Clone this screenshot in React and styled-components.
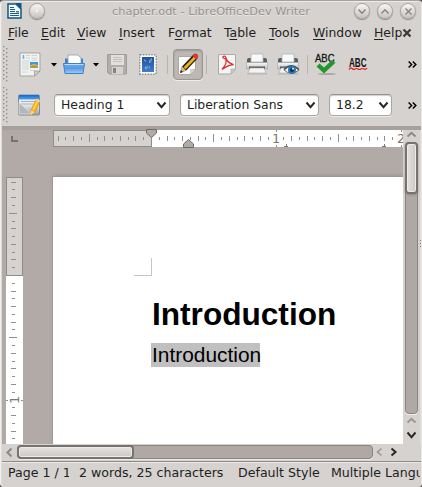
import React from "react";
import styled, { createGlobalStyle, css } from "styled-components";

const Global = createGlobalStyle`
  *, *::before, *::after { box-sizing: border-box; }
  html, body { margin: 0; padding: 0; overflow: hidden; background: #55524f; }
  svg { display: block; flex: none; overflow: visible; }
`;

const Window = styled.div`
  width: 422px;
  height: 487px;
  display: flex;
  flex-direction: column;
  overflow: hidden;
  background: #d6d2cf;
  border-top: 1px solid #a5a19e;
  border-left: 1px solid #f1efed;
  border-right: 1px solid #e9e7e5;
  border-radius: 4px;
  box-shadow: inset 0 1px 0 #eeecea, inset 1px 0 0 #dddad8;
  font-family: "DejaVu Sans", sans-serif;
  font-size: 12.4px;
  color: #221f1e;
  white-space: nowrap;
`;

const TitleBar = styled.header`
  height: 21px;
  flex: none;
  display: flex;
  align-items: center;
  padding: 0 5px 1px 6px;
`;
const TitleText = styled.div`
  flex: 1;
  padding: 0 0 0 67px;
  font-size: 11.35px;
  color: #969290;
  text-shadow: 0 1px 0 #e9e7e5;
`;
const TitleButtons = styled.div`
  display: flex;
  gap: 7px;
`;
const RoundButton = styled.div`
  width: 16px;
  height: 16px;
  flex: none;
  margin-left: ${(p) => p.$gap || 0}px;
  display: grid;
  place-items: center;
  border-radius: 50%;
  border: 1px solid #aaa6a3;
  background: linear-gradient(#f7f6f5, #c8c4c1);
  box-shadow: 0 1px 1px #8f8b88;
`;
const Dot = styled.i`
  width: 2px;
  height: 2px;
  border-radius: 50%;
  background: #fff;
`;

const MenuBar = styled.nav`
  height: 21px;
  flex: none;
  display: flex;
  align-items: center;
  padding-left: 7px;
`;
const MenuItem = styled.div`
  width: ${(p) => p.$w}px;
  flex: none;
  line-height: 15px;
  u { text-decoration-thickness: 1px; text-underline-offset: 2px; }
`;

const Toolbar = styled.div`
  height: ${(p) => p.$h}px;
  flex: none;
  display: flex;
  align-items: center;
  padding: 0 0 ${(p) => p.$lift || 0}px 1px;
`;
const Slot = styled.div`
  width: ${(p) => p.$w}px;
  height: 100%;
  flex: none;
  display: flex;
  align-items: center;
`;
const Separator = styled.div`
  width: 1px;
  height: 19px;
  margin-right: ${(p) => p.$after}px;
  flex: none;
  background: #b7b3b0;
`;
const Pressed = styled.div`
  width: 30px;
  height: 31px;
  margin-right: 3px;
  flex: none;
  display: grid;
  place-items: center;
  background: #bdb8b4;
  border: 1px solid #9a9692;
  border-radius: 4px;
  box-shadow: inset 0 1px 2px #9c9793, 0 1px 0 #efedeb;
`;
const Combo = styled.div`
  width: ${(p) => p.$w}px;
  height: 22px;
  margin-right: 10px;
  padding: 0 3px 1px 6px;
  flex: none;
  display: flex;
  align-items: center;
  justify-content: space-between;
  background: #fff;
  border: 1px solid #aaa6a3;
  border-top-color: #96928f;
  border-radius: 4px;
  box-shadow: inset 0 1px 1px #d0cdca, 0 1px 0 #eeecea;
`;

const Workspace = styled.main`
  height: 318px;
  flex: none;
  display: flex;
  margin-left: 1px;
  background: #b2aaa7;
  border-top: 4px solid #a7a19d;
`;
const RulerGutter = styled.div`
  width: 51px;
  flex: none;
  display: flex;
  flex-direction: column;
  padding-left: 4px;
`;
const TabCorner = styled.div`
  height: 47px;
  flex: none;
  padding: 6px 0 0 5px;
`;
const VRuler = styled.div`
  width: 17px;
  flex: 1;
  background: linear-gradient(#d6d2cf 99px, #fff 99px);
`;
const DocumentColumn = styled.div`
  width: 350px;
  flex: none;
  display: flex;
  flex-direction: column;
`;
const HRuler = styled.div`
  height: 17px;
  flex: none;
  margin-bottom: 29px;
  background: linear-gradient(90deg, #d6d2cf 99px, #fff 99px);
`;
const Page = styled.article`
  flex: 1;
  padding: 81px 0 0 98px;
  background: #fff;
  border-top: 1px solid #9d9793;
  box-shadow: -1px 0 0 #a09995, 0 -1px 3px #9d9692;
  clip-path: inset(-5px 0 0 -5px);
  font-family: "Liberation Sans", sans-serif;
  color: #000;
`;
const MarginCorner = styled.div`
  width: 18px;
  height: 18px;
  margin-left: -17px;
  border-right: 1px solid #c4c4c4;
  border-bottom: 1px solid #c4c4c4;
`;
const Heading = styled.h1`
  margin: 20px 0 10px 1px;
  font-size: 31.6px;
  line-height: 37px;
  font-weight: 700;
`;
const Selection = styled.span`
  display: block;
  width: 109px;
  height: 24px;
  padding-left: 1px;
  line-height: 24px;
  font-size: 20.9px;
  background: #c0c0c0;
`;

const scrollTrack = css`
  flex: none;
  background: #b0a8a5;
  border: 1px solid #898481;
  border-radius: 4px;
  box-shadow: 0 1px 0 #eeecea;
`;
const VScroll = styled.div`
  width: 17px;
  flex: none;
  display: flex;
  flex-direction: column;
  align-items: center;
  padding-top: 2px;
  background: #d6d2cf;
`;
const VTrack = styled.div`
  ${scrollTrack}
  width: 13px;
  height: 272px;
  margin: 5px 0 4px;
`;
const VThumb = styled.div`
  height: 52px;
  margin: -1px 0 0 -1px;
  width: 13px;
  border: 2px solid #77726f;
  border-radius: 4px;
  background: linear-gradient(90deg, #e5e3e1, #cbc7c4);
  box-shadow: inset 0 0 0 1px #eeeceb, 0 1px 2px #8d8784;
`;
const ArrowGap = styled.div`
  height: 9px;
  flex: none;
`;
const SideGrip = styled.div`
  flex: 1;
  display: grid;
  place-items: center;
  padding-bottom: 88px;
  background: #dedbd9;
`;
const HScroll = styled.div`
  height: 17px;
  flex: none;
  display: flex;
  align-items: center;
  padding: 0 0 1px 6px;
`;
const HTrack = styled.div`
  ${scrollTrack}
  width: 356px;
  height: 14px;
  margin: 0 4px 0 5px;
`;
const HThumb = styled.div`
  width: 117px;
  height: 14px;
  margin: -1px 0 0 -1px;
  border: 2px solid #77726f;
  border-radius: 4px;
  background: linear-gradient(#e5e3e1, #cbc7c4);
  box-shadow: inset 0 0 0 1px #eeeceb;
`;
const StatusBar = styled.footer`
  flex: 1;
  display: flex;
  margin-left: 1px;
  padding: 3px 0 0 6px;
  border-top: 1px solid #8e8a87;
  box-shadow: inset 0 1px 0 #eceae8;
  font-size: 12.6px;
  line-height: 15px;
`;
const StatusField = styled.div`
  width: ${(p) => p.$w}px;
  margin-right: ${(p) => p.$gap || 0}px;
  flex: none;
  overflow: hidden;
`;

const Chevron = ({ dir, color = "#2b2826", w = 9, h = 5, sw = 2 }) => {
  const pts = {
    down: `0.5,0.5 ${w / 2},${h - 0.8} ${w - 0.5},0.5`,
    up: `0.5,${h - 0.5} ${w / 2},0.8 ${w - 0.5},${h - 0.5}`,
    left: `${w - 0.5},0.5 0.5,${h / 2} ${w - 0.5},${h - 0.5}`,
    right: `0.5,0.5 ${w - 0.5},${h / 2} 0.5,${h - 0.5}`,
  }[dir];
  return (
    <svg width={w} height={h}>
      <polyline points={pts} fill="none" stroke={color} strokeWidth={sw} />
    </svg>
  );
};
const Caret = () => (
  <svg width="6" height="3"><path d="M0 0H6L3 3.4Z" fill="#000" /></svg>
);
const More = () => (
  <svg width="9" height="7">
    <path d="M.6 .5L3.6 3.5L.6 6.5M4.8 .5L7.8 3.5L4.8 6.5" fill="none" stroke="#000" strokeWidth="1.5" />
  </svg>
);
const Grip = ({ rows }) => (
  <svg width="6" height={rows * 4}>
    {Array.from({ length: rows }, (_, i) => (
      <g key={i} fill="#938e8a">
        <rect x="1" y={i * 4} width="1.4" height="1.4" />
        <rect x="4" y={i * 4 + 2} width="1.4" height="1.4" />
      </g>
    ))}
  </svg>
);

const WriterLogo = () => (
  <svg width="15" height="16">
    <path d="M1 1H9L14 6V15H1Z" fill="#f5fafc" stroke="#0d5688" strokeWidth="1.5" />
    <path d="M8.6 0H14.5V6Z" fill="#0d5688" />
    <path d="M3 4.5H7M3 6.5H8M3 8.5H8M3 10.5H12M3 12.5H12" stroke="#146093" />
    <path d="M9 8H12V9.5H9Z" fill="#3481ac" />
  </svg>
);
const NewDocument = () => (
  <svg width="22" height="25">
    <path d="M1 1H21V19L15.5 24H1Z" fill="#f1f2f2" stroke="#a6a6a6" />
    <path d="M4.5 3V7" stroke="#5fb1e8" strokeWidth="1.5" />
    <path d="M7 3.5H11M7 6H11M12.5 3.5H18M12.5 6H18M3 9H11M3 11H10M3 13H10M3 15H10M3 17H10M12.5 8H18M3 20H9M11 18.5H16" stroke="#cdd0d1" strokeWidth=".9" />
    <rect x="11" y="10" width="8" height="3" fill="#359cdf" />
    <rect x="11" y="13" width="8" height="3" fill="#b89a3a" />
    <path d="M11 13.8L15 12.4L19 13.8" stroke="#d8c27a" fill="none" />
    <path d="M15.5 24V19H21Z" fill="#d0d0d0" stroke="#909090" strokeWidth=".7" />
  </svg>
);
const OpenFolder = () => (
  <svg width="22" height="21">
    <path d="M2 10V4.5H4.5L5.5 7H17L18 4.5H20V10Z" fill="#3d80c4" />
    <path d="M5 1H15L18 4V12H5Z" fill="#fff" stroke="#8d9aa7" strokeWidth=".8" />
    <path d="M.5 9.5H21.5L20 19.5H2Z" fill="url(#folderFront)" stroke="#3f80cc" />
    <path d="M1.5 10.5H20.5" stroke="#b9dcfa" />
    <defs>
      <linearGradient id="folderFront" x2="0" y2="1">
        <stop stopColor="#6aa8ec" /><stop offset=".5" stopColor="#5a9ce2" /><stop offset="1" stopColor="#a4cdf7" />
      </linearGradient>
    </defs>
  </svg>
);
const Save = () => (
  <svg width="20" height="21">
    <path d="M.5 .5H19.5V20H2L.5 18.5Z" fill="#b0aeac" stroke="#a09d9b" />
    <rect x="4" y="1" width="13" height="10" fill="#e2e0df" />
    <path d="M6 3.5H15M6 5.5H15M6 7.5H15" stroke="#c4c2c0" />
    <rect x="5" y="13" width="11" height="7" fill="#d5d3d1" />
    <rect x="6" y="14" width="3" height="5" fill="#858381" />
  </svg>
);
const Stamp = () => (
  <svg width="18" height="21">
    <rect x="1" y="1" width="16" height="19" fill="#f6f6f6" stroke="#8f8f8f" strokeWidth="2" strokeDasharray="1.4 1.4" />
    <rect x="1.5" y="1.5" width="15" height="18" fill="#fafafa" />
    <rect x="3" y="3" width="12" height="15" fill="url(#stampFill)" />
    <path d="M5 7L7.5 6L7 8ZM10 6L13 4.5L12.5 8L10.5 9ZM5.5 13L8.5 11.5L10 14L7 16Z" fill="#5d93d4" />
    <path d="M5 6H6M10 8H11M6 14H7M10 13H11M12 5H13" stroke="#a6c9ee" />
    <defs>
      <linearGradient id="stampFill" x2="0" y2="1">
        <stop stopColor="#234f9a" /><stop offset="1" stopColor="#3f7cc9" />
      </linearGradient>
    </defs>
  </svg>
);
const Edit = () => (
  <svg width="22" height="25">
    <path d="M1.5 4.5H18.5V17L13.5 22.5H1.5Z" fill="#fcfcfc" stroke="#9d9a97" strokeWidth=".8" />
    <path d="M13.5 22.5V17.5H18.5Z" fill="#d7d7d7" stroke="#aaa" strokeWidth=".5" />
    <path d="M3 21L5 14.5L16 3L20.3 6.8L9.2 18.4Z" fill="#252525" />
    <path d="M6.6 15.3L16.8 4.7L18.8 6.6L8.6 17.2Z" fill="#f0b31c" />
    <path d="M15.2 3.7L17 1.8Q19 1 20.5 2.6Q22 4.5 21 6.1L19.5 7.6Z" fill="#d93831" />
    <path d="M5.2 14.5L9 18.4L3 21Z" fill="#e1b781" />
    <path d="M3 21L3.9 18L6 20Z" fill="#222" />
  </svg>
);
const Pdf = () => (
  <svg width="18" height="21">
    <path d="M.5 .5H17.5V15L13 20H.5Z" fill="#f4f4f4" stroke="#aaa" />
    <path d="M13 20V15H17.5Z" fill="#ccc" stroke="#aaa" strokeWidth=".6" />
    <path d="M5 2.5Q7.5 1.4 8 4Q9 8.5 15.5 10.6Q9.5 11.2 4 15.5Q9.7 9 7.6 5Q4 4 5 2.5Z" fill="none" stroke="#e02c2c" strokeWidth="1.2" />
  </svg>
);
const Printer = ({ eye }) => (
  <svg width="22" height="22">
    <path d="M1 10V7Q1 5 3 5H19Q21 5 21 7V10Z" fill="#5a5c5c" />
    <path d="M5 1H17V9H5Z" fill="#f9f9f9" stroke="#b3b3b3" strokeWidth=".8" />
    <path d="M.5 9.5H21.5V16H.5Z" fill="url(#printerBody)" stroke="#a2a2a2" strokeWidth=".6" />
    <path d="M3 13.5H19V16H3Z" fill="#555" />
    <path d="M4 15H18L20 20H2Z" fill="#f4f4f4" stroke="#aaa" strokeWidth=".6" />
    <path d="M1 21H21" stroke="#b5b1ae" />
    <defs>
      <linearGradient id="printerBody" x2="0" y2="1">
        <stop stopColor="#fafafa" /><stop offset="1" stopColor="#bdbdbd" />
      </linearGradient>
    </defs>
    {eye && (
      <g>
        <path d="M7 17Q14 10 22 17Q14 23.5 7 17Z" fill="#edf5f9" stroke="#66737d" />
        <path d="M7 16.5Q14 9 22 16.5" fill="none" stroke="#4b565e" strokeWidth="1.4" />
        <circle cx="15" cy="17" r="4" fill="#2877b9" />
        <circle cx="15" cy="17" r="2" fill="#122f43" />
        <circle cx="16" cy="15.7" r="1" fill="#d6f3ff" />
      </g>
    )}
  </svg>
);
const Abc = styled.text`
  font-family: "Liberation Sans", sans-serif;
  font-weight: ${(p) => p.$weight};
  font-size: ${(p) => p.$size}px;
  fill: #151515;
`;
const Spelling = () => (
  <svg width="22" height="22">
    <ellipse cx="12" cy="21" rx="9" ry="1" fill="#aaa6a3" />
    <Abc x="0" y="8.5" $weight={400} $size={10.2} textLength="19.5" lengthAdjust="spacingAndGlyphs" stroke="#151515" strokeWidth=".3">ABC</Abc>
    <path d="M1.5 13.5L4.5 10.5L9 14.5L17 7L20.5 9.8L9 20.5Z" fill="#23962e" />
  </svg>
);
const AutoSpelling = () => (
  <svg width="18" height="14">
    <Abc x="0" y="9.5" $weight={700} $size={12.2} textLength="17.5" lengthAdjust="spacingAndGlyphs">ABC</Abc>
    <path d="M0 12.5Q1.5 10 3 11.5T6 12T9 12T12 12T15 12T18 11" fill="none" stroke="#ed1515" strokeWidth="1.2" />
  </svg>
);
const Styles = () => (
  <svg width="23" height="23">
    <rect x=".5" y="1" width="21" height="20" rx="1" fill="url(#sheet)" stroke="#868b90" />
    <rect x="1" y="1" width="20" height="4.5" fill="url(#sheetBar)" />
    <path d="M3 7.5H18M3 10H15" stroke="#aab4be" />
    <path d="M1 8.5L14 20H1Z" fill="#b3b7bc" stroke="#e8ebee" strokeWidth=".7" />
    <path d="M12 21.5L13.2 15.5L17.5 6.5L21.6 8.2L17.3 18Z" fill="#f8b11b" stroke="#dd9114" strokeWidth=".6" />
    <path d="M15.2 15.5L19.3 7.5" stroke="#ffdf60" strokeWidth="1.3" />
    <path d="M17.5 6.5L18.5 4.8L22.3 6.4L21.6 8.2Z" fill="#f0cf9c" />
    <path d="M12 21.5L13.2 16.6L16.6 18.3Z" fill="#f2d6ad" />
    <defs>
      <linearGradient id="sheet" x2="0" y2="1">
        <stop stopColor="#f4f6f8" /><stop offset=".5" stopColor="#e4e7ea" /><stop offset="1" stopColor="#9a9ea3" />
      </linearGradient>
      <linearGradient id="sheetBar" x2="0" y2="1">
        <stop stopColor="#1668c9" /><stop offset="1" stopColor="#4fa3ee" />
      </linearGradient>
    </defs>
  </svg>
);

const RulerNumber = styled.text`
  font-family: "DejaVu Sans", sans-serif;
  font-size: 12.8px;
  fill: #777;
`;
const STEP = 7.78;
const ticks = (from, to) =>
  Array.from({ length: to - from + 1 }, (_, i) => from + i).filter((n) => n !== 0 && n % 16 !== 0);
const tickLength = (n) => (n % 8 === 0 ? 8 : n % 2 === 0 ? 5 : 3);

const HorizontalTicks = () => (
  <svg width="350" height="17">
    <rect x=".5" y=".5" width="98" height="16" fill="none" stroke="#8f8b88" />
    {ticks(-12, 31).map((n) => {
      const l = tickLength(n);
      return <rect key={n} x={Math.round(98 + n * STEP)} y={Math.round(8 - l / 2)} width="1" height={l} fill="#8f8f8f" />;
    })}
    {[223, 348].map((x) => (
      <path key={x} d={`M${x + 0.5} 0V2M${x + 0.5} 15V17`} stroke="#8f8f8f" />
    ))}
    <RulerNumber x="219" y="13">1</RulerNumber>
    <svg width="350" height="17" overflow="hidden" viewBox="0 0 350 17">
      <RulerNumber x="344" y="13">2</RulerNumber>
    </svg>
    <path d="M231 16.5H235M233.5 14V17M329 16.5H333M331.5 14V17" stroke="#777" />
    <path d="M93.5 -.5H103.5V3L98.5 7.5L93.5 3Z" fill="#b2aaa7" stroke="#6e6a67" />
    <path d="M130.5 17.5H140.5V14L135.5 9.5L130.5 14Z" fill="#b2aaa7" stroke="#6e6a67" />
  </svg>
);
const VerticalTicks = () => (
  <svg width="17" height="267">
    <rect x=".5" y=".5" width="16" height="98" fill="none" stroke="#8f8b88" />
    {ticks(-12, 21).map((n) => {
      const l = tickLength(n);
      return <rect key={n} x={Math.round(7.4 - l / 2)} y={Math.round(98 + n * STEP)} width={l} height="1" fill="#8f8f8f" />;
    })}
    <path d="M0 223.5H2M15 223.5H17" stroke="#8f8f8f" />
    <RulerNumber transform="translate(13 227) rotate(-90)">1</RulerNumber>
  </svg>
);

const menus = [
  ["F", "ile", 33], ["E", "dit", 36], ["V", "iew", 42], ["I", "nsert", 49],
  ["F", "o", "rmat", 56], ["T", "a", "ble", 45], ["T", "ools", 44], ["W", "indow", 61], ["H", "elp", 29],
];

export default function App() {
  return (
    <>
      <Global />
      <Window>
        <TitleBar>
          <WriterLogo />
          <RoundButton $gap={7}><Dot /></RoundButton>
          <TitleText>chapter.odt - LibreOfficeDev Writer</TitleText>
          <TitleButtons>
            <RoundButton><Chevron dir="down" color="#85817e" w={8} sw={1.4} /></RoundButton>
            <RoundButton><Chevron dir="up" color="#85817e" w={8} sw={1.4} /></RoundButton>
            <RoundButton>
              <svg width="7" height="7"><path d="M.5 .5L6.5 6.5M6.5 .5L.5 6.5" stroke="#85817e" strokeWidth="1.3" /></svg>
            </RoundButton>
          </TitleButtons>
        </TitleBar>
        <MenuBar>
          {menus.map((m, i) => {
            const w = m[m.length - 1];
            return m.length === 4
              ? <MenuItem key={i} $w={w}>{m[0]}<u>{m[1]}</u>{m[2]}</MenuItem>
              : <MenuItem key={i} $w={w}><u>{m[0]}</u>{m[1]}</MenuItem>;
          })}
          <svg width="8" height="8"><path d="M.5 .5L7.5 7.5M7.5 .5L.5 7.5" stroke="#3d3a38" strokeWidth="2.3" /></svg>
        </MenuBar>
        <Toolbar $h={42}>
          <Slot $w={17}><Grip rows={9} /></Slot>
          <Slot $w={32}><NewDocument /></Slot>
          <Slot $w={12}><Caret /></Slot>
          <Slot $w={30}><OpenFolder /></Slot>
          <Slot $w={14}><Caret /></Slot>
          <Slot $w={32}><Save /></Slot>
          <Slot $w={28}><Stamp /></Slot>
          <Separator $after={5} />
          <Pressed><Edit /></Pressed>
          <Separator $after={11} />
          <Slot $w={28}><Pdf /></Slot>
          <Slot $w={31}><Printer /></Slot>
          <Slot $w={30}><Printer eye /></Slot>
          <Separator $after={7} />
          <Slot $w={34}><Spelling /></Slot>
          <Slot $w={59}><AutoSpelling /></Slot>
          <More />
        </Toolbar>
        <Toolbar $h={41} $lift={1}>
          <Slot $w={16}><Grip rows={9} /></Slot>
          <Slot $w={36}><Styles /></Slot>
          <Combo $w={116}>Heading 1<Chevron dir="down" h={6} /></Combo>
          <Combo $w={139}>Liberation Sans<Chevron dir="down" h={6} /></Combo>
          <Combo $w={63}>18.2<Chevron dir="down" h={6} /></Combo>
          <Slot $w={6} />
          <More />
        </Toolbar>
        <Workspace>
          <RulerGutter>
            <TabCorner>
              <svg width="7" height="6"><path d="M1 0V5H7" fill="none" stroke="#77726f" strokeWidth="2" /></svg>
            </TabCorner>
            <VRuler><VerticalTicks /></VRuler>
          </RulerGutter>
          <DocumentColumn>
            <HRuler><HorizontalTicks /></HRuler>
            <Page>
              <MarginCorner />
              <Heading>Introduction</Heading>
              <Selection>Introduction</Selection>
            </Page>
          </DocumentColumn>
          <VScroll>
            <Chevron dir="up" color="#8c8885" />
            <VTrack><VThumb /></VTrack>
            <Chevron dir="up" color="#9b9794" />
            <ArrowGap />
            <Chevron dir="down" h={6} />
          </VScroll>
          <SideGrip>
            <svg width="1" height="7"><path d="M.5 0V1M.5 3V4M.5 6V7" stroke="#777" /></svg>
          </SideGrip>
        </Workspace>
        <HScroll>
          <Chevron dir="left" color="#8c8885" w={5} h={9} />
          <HTrack><HThumb /></HTrack>
          <Slot $w={14}><Chevron dir="left" color="#9b9794" w={5} h={8} sw={1.6} /></Slot>
          <Chevron dir="right" w={5} h={8} />
        </HScroll>
        <StatusBar>
          <StatusField $w={61} $gap={10}>Page 1 / 1</StatusField>
          <StatusField $w={150} $gap={9}>2 words, 25 characters</StatusField>
          <StatusField $w={84} $gap={9}>Default Style</StatusField>
          <StatusField $w={89}>Multiple Languages</StatusField>
        </StatusBar>
      </Window>
    </>
  );
}
